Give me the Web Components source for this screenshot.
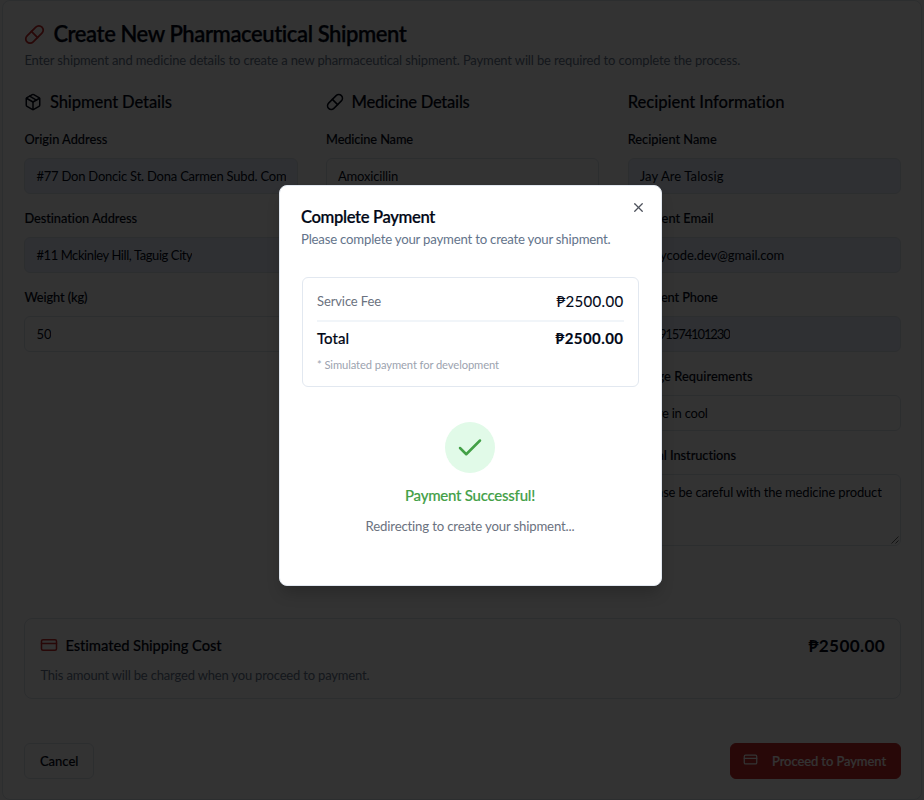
<!DOCTYPE html>
<html lang="en"><head><meta charset="utf-8"><title>Create New Pharmaceutical Shipment</title>
<style>
body{margin:0;width:924px;height:800px;overflow:hidden;background:#f8f8f8;font-family:Lato,"Noto Sans",sans-serif;color:#020817}
</style></head><body>
<shipment-page></shipment-page>
<script>
const make=(name,html,setup)=>customElements.define(name,class extends HTMLElement{
  connectedCallback(){
    if(this.shadowRoot)return;
    const t=document.createElement('template');
    t.innerHTML=typeof html==='function'?html(this):html;
    this.attachShadow({mode:'open'}).append(t.content.cloneNode(true));
    if(setup)setup(this);
  }
});

/* A single line of text whose tracking is set so that it spans w pixels. */
make('line-text','<style>:host{display:block;white-space:pre;width:max-content;flex:none}span{display:inline-block}</style><span><slot></slot></span>',el=>{
  const w=+el.getAttribute('w');
  if(!w)return;
  const s=el.shadowRoot.querySelector('span');
  const n=el.textContent.length;
  const d=(w-s.getBoundingClientRect().width)/n;
  s.style.letterSpacing=d.toFixed(3)+'px';
});

const icons={
  pill:'<path d="m10.5 20.5 10-10a4.95 4.95 0 1 0-7-7l-10 10a4.95 4.95 0 1 0 7 7Z"/><path d="m8.5 8.5 7 7"/>',
  box:'<path d="m7.5 4.27 9 5.15"/><path d="M21 8a2 2 0 0 0-1-1.73l-7-4a2 2 0 0 0-2 0l-7 4A2 2 0 0 0 3 8v8a2 2 0 0 0 1 1.73l7 4a2 2 0 0 0 2 0l7-4A2 2 0 0 0 21 16Z"/><path d="m3.3 7 8.7 5 8.7-5"/><path d="M12 22V12"/>',
  card:'<rect width="20" height="14" x="2" y="5" rx="2"/><path d="M2 10h20"/>',
  x:'<path d="M18 6 6 18"/><path d="m6 6 12 12"/>',
  check:'<path d="M20 6 9 17l-5-5"/>'
};
make('line-icon',el=>`<style>:host{display:block;flex:none;width:${el.getAttribute('size')}px;height:${el.getAttribute('size')}px}svg{display:block;width:100%;height:100%}</style><svg viewBox="0 0 24 24" fill="none" stroke="currentColor" stroke-width="2" stroke-linecap="round" stroke-linejoin="round">${icons[el.getAttribute('name')]}</svg>`);

make('form-field',el=>`<style>
:host{display:block;height:79.1px}
.l{font-size:12.8px;line-height:17px;font-weight:500;height:27px;-webkit-text-stroke:.12px}
.b{box-sizing:border-box;height:36.5px;border:1px solid #dde3eb;border-radius:6px;padding:0 11px;display:flex;align-items:center;overflow:hidden;font-size:13px;line-height:19px;background:${el.hasAttribute('filled')?'#e8f0fe':'#fff'}}
.c{overflow:hidden;padding-top:1.5px}
:host([area]) .b{height:72px;align-items:flex-start;padding-top:6.5px;position:relative}
svg{display:none;position:absolute;right:1px;bottom:1px}
:host([area]) svg{display:block}
</style><div class="l"><line-text w="${el.getAttribute('lw')}">${el.getAttribute('label')}</line-text></div>
<div class="b"><div class="c"><slot></slot></div><svg width="8" height="8" viewBox="0 0 8 8" stroke="#555" stroke-width=".9"><path d="M.5 7.5l7-7M4.5 7.5l3-3"/></svg></div>`);

make('form-section',`<style>
:host{display:block;min-width:0}
header{display:flex;align-items:center;gap:7.5px;height:24px;margin-bottom:16.5px;font-size:16.6px;font-weight:500;line-height:24px;-webkit-text-stroke:.15px}
</style><header><slot name="icon"></slot><slot name="title"></slot></header><slot></slot>`);

make('cost-card',`<style>
:host{display:flex;justify-content:space-between;box-sizing:border-box;height:80.5px;border:1px solid #dde3eb;border-radius:8px;padding:15px 15px 0}
.t{display:flex;align-items:center;gap:7px;height:21px;font-size:14.8px;font-weight:500;-webkit-text-stroke:.15px}
.t line-icon{margin-top:1px}
.n{font-size:13px;line-height:20px;margin-top:10px;color:#64748b}
.p{font-size:17.2px;font-weight:700;line-height:24px}
line-icon{color:#c62828}
</style><div><div class="t"><line-icon name="card" size="18"></line-icon><line-text w="156.5">Estimated Shipping Cost</line-text></div>
<div class="n"><line-text w="329">This amount will be charged when you proceed to payment.</line-text></div></div>
<div class="p"><line-text w="76.5">₱2500.00</line-text></div>`);

make('action-button',`<style>
:host{display:flex;align-items:center;box-sizing:border-box;height:36px;border:1px solid #dde3eb;border-radius:6px;padding:1px 14.5px 0;font-size:13px;font-weight:500;-webkit-text-stroke:.15px}
:host([primary]){background:#c62828;border-color:#c62828;color:#fff;padding:1px 14px 0 12.5px}
::slotted(line-icon){margin:-4px 14px 0 0}
</style><slot></slot>`);

make('payment-dialog',`<style>
:host{position:absolute;left:278.5px;top:185px;width:383.5px;height:400.5px;box-sizing:border-box;background:#fff;border:1px solid #e2e8f0;border-radius:8px;padding:21.5px 22px 22px 21.5px;box-shadow:0 10px 15px -3px #0003}
.x{position:absolute;right:15px;top:14px;opacity:.7}
.h{font-size:16.6px;font-weight:600;line-height:19px;-webkit-text-stroke:.2px}
.d{font-size:13.2px;line-height:19px;margin-top:3.5px;color:#64748b}
.box{box-sizing:border-box;height:110.5px;margin:27.5px 0 0 .5px;border:1px solid #e2e8f0;border-radius:6px;padding:11.5px 14.5px 0}
.r{display:flex;justify-content:space-between;align-items:center;height:24px;font-size:15px;-webkit-text-stroke:.1px}
.r .s{font-size:13px;color:#6b7280;-webkit-text-stroke:0}
.r.t{font-weight:500;margin-top:4.5px;-webkit-text-stroke:.15px}
.r b{font-weight:700}
hr{border:0;height:2px;background:#f1f5f9;margin:6.5px 0 0}
.m{font-size:11.2px;color:#9ca3af;line-height:16px;margin-top:6.5px}
.ok{display:flex;flex-direction:column;align-items:center;margin-top:35px}
.c{width:50px;height:51px;border-radius:50%;background:#e1fae8;display:grid;place-items:center;color:#43a047}
.g{font-size:15px;font-weight:500;color:#43a047;line-height:22px;margin-top:10.5px;-webkit-text-stroke:.15px}
.q{font-size:13.2px;color:#6b7280;line-height:19px;margin-top:11.5px}
</style>
<line-icon class="x" name="x" size="15"></line-icon>
<div class="h"><line-text w="134">Complete Payment</line-text></div>
<div class="d"><line-text w="309.5">Please complete your payment to create your shipment.</line-text></div>
<div class="box"><div class="r"><line-text class="s" w="64">Service Fee</line-text><line-text w="67">₱2500.00</line-text></div><hr>
<div class="r t"><line-text w="32">Total</line-text><b><line-text w="68">₱2500.00</line-text></b></div>
<div class="m"><line-text w="182">* Simulated payment for development</line-text></div></div>
<div class="ok"><div class="c"><line-icon name="check" size="30"></line-icon></div>
<div class="g"><line-text w="130">Payment Successful!</line-text></div>
<div class="q"><line-text w="209">Redirecting to create your shipment...</line-text></div></div>`);

make('shipment-page',`<style>
:host{display:block;position:relative;width:924px;height:800px}
main{box-sizing:border-box;height:800px;margin:0 2px;border:1px solid #dde3eb;border-radius:8px;background:#fff;padding:21px 20px 0 21.4px}
h1{margin:0;display:flex;align-items:center;gap:8px;height:24px;font-size:22px;font-weight:600;line-height:24px;-webkit-text-stroke:.25px}
h1 line-icon{color:#c62828}
.sub{font-size:13px;line-height:19px;margin-top:4.5px;color:#64748b}
.cols{display:grid;grid-template-columns:repeat(3,1fr);gap:28.3px;height:528px;margin-top:20.5px}
.acts{display:flex;justify-content:space-between;margin-top:44px}
.veil{position:absolute;inset:0;background:#000c}
</style>
<main><h1><line-icon name="pill" size="21"></line-icon><line-text w="353.5">Create New Pharmaceutical Shipment</line-text></h1>
<div class="sub"><line-text w="716">Enter shipment and medicine details to create a new pharmaceutical shipment. Payment will be required to complete the process.</line-text></div>
<div class="cols">
<form-section><line-icon slot="icon" name="box" size="18"></line-icon><line-text slot="title" w="122">Shipment Details</line-text>
<form-field label="Origin Address" lw="83" filled><line-text w="250">#77 Don Doncic St. Dona Carmen Subd. Com</line-text></form-field>
<form-field label="Destination Address" lw="113" filled><line-text w="156">#11 Mckinley Hill, Taguig City</line-text></form-field>
<form-field label="Weight (kg)" lw="63"><line-text w="15">50</line-text></form-field></form-section>
<form-section><line-icon slot="icon" name="pill" size="18"></line-icon><line-text slot="title" w="118">Medicine Details</line-text>
<form-field label="Medicine Name" lw="87"><line-text w="60">Amoxicillin</line-text></form-field></form-section>
<form-section><line-text slot="title" w="157">Recipient Information</line-text>
<form-field label="Recipient Name" lw="89" filled><line-text w="84">Jay Are Talosig</line-text></form-field>
<form-field label="Recipient Email" lw="86" filled><line-text w="144.5">jayrycode.dev@gmail.com</line-text></form-field>
<form-field label="Recipient Phone" lw="90" filled><line-text w="90">+6391574101230</line-text></form-field>
<form-field label="Storage Requirements" lw="125"><line-text w="68">Store in cool</line-text></form-field>
<form-field label="Special Instructions" lw="108.5" area><line-text w="242">Please be careful with the medicine product</line-text></form-field></form-section>
</div>
<cost-card></cost-card>
<div class="acts"><action-button><line-text w="38.5">Cancel</line-text></action-button>
<action-button primary><line-icon name="card" size="15"></line-icon><line-text w="114">Proceed to Payment</line-text></action-button></div>
</main><div class="veil"></div><payment-dialog></payment-dialog>`);
</script></body></html>
